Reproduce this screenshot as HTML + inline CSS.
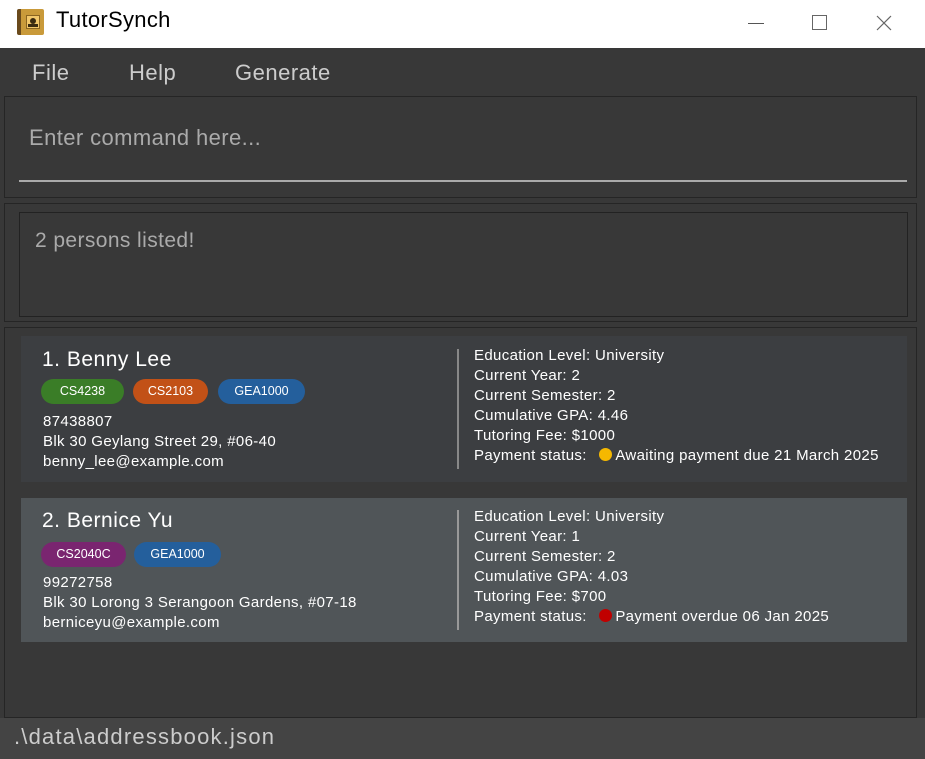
<!DOCTYPE html><html><head><style>
*{margin:0;padding:0;box-sizing:border-box}
body{width:925px;height:759px;overflow:hidden;background:#383838;font-family:"Liberation Sans",sans-serif;position:relative}
.a{position:absolute}
.t{color:#fff;font-size:15px;line-height:20px;white-space:nowrap;letter-spacing:0.35px}
.tag{position:absolute;height:25px;border-radius:13px;color:#fff;font-size:12.5px;line-height:25px;text-align:center}
.dot{display:inline-block;width:13px;height:13px;border-radius:50%;vertical-align:-1px;margin:0 3px 0 8px}
</style></head><body>
<div class="a" style="left:0;top:0;width:925px;height:48px;background:#fff"></div>
<div class="a" style="left:17px;top:9px;width:27px;height:26px;background:#c99a3a;border-left:4px solid #6a4a1c;border-radius:2px"><div class="a" style="left:5px;top:6px;width:14px;height:14px;background:#f2c76a;border:1px solid #8a6420"></div><div class="a" style="left:9px;top:9px;width:6px;height:6px;border-radius:50%;background:#3a2a10"></div><div class="a" style="left:7px;top:15px;width:10px;height:3px;background:#3a2a10"></div></div>
<div class="a" style="left:56px;top:7px;font-size:22px;color:#000;letter-spacing:0.3px">TutorSynch</div>
<div class="a" style="left:748px;top:23px;width:16px;height:1px;background:#555"></div>
<div class="a" style="left:812px;top:15px;width:15px;height:15px;border:1px solid #666"></div>
<svg class="a" style="left:876px;top:15px" width="16" height="16"><path d="M1 1L15 15M15 1L1 15" stroke="#666" stroke-width="1.2"/></svg>
<div class="a" style="left:32px;top:60px;font-size:22px;color:#ccc;letter-spacing:0.5px">File</div>
<div class="a" style="left:129px;top:60px;font-size:22px;color:#ccc;letter-spacing:0.5px">Help</div>
<div class="a" style="left:235px;top:60px;font-size:22px;color:#ccc;letter-spacing:0.5px">Generate</div>
<div class="a" style="left:4px;top:96px;width:913px;height:102px;border:1px solid #252525"></div>
<div class="a" style="left:29px;top:125px;font-size:22px;color:#aaa;letter-spacing:0.4px">Enter command here...</div>
<div class="a" style="left:19px;top:180px;width:888px;height:2px;background:#aaa"></div>
<div class="a" style="left:4px;top:203px;width:913px;height:119px;border:1px solid #252525"></div>
<div class="a" style="left:19px;top:212px;width:889px;height:105px;border:1px solid #222"></div>
<div class="a" style="left:35px;top:229px;font-size:21px;color:#aaa;letter-spacing:0.4px">2 persons listed!</div>
<div class="a" style="left:4px;top:327px;width:913px;height:391px;border:1px solid #252525"></div>
<div class="a" style="left:21px;top:336px;width:886px;height:146px;background:#3c3e41"></div>
<div class="a" style="left:21px;top:498px;width:886px;height:144px;background:#505558"></div>
<div class="a" style="left:457px;top:349px;width:2px;height:120px;background:#888"></div>
<div class="a" style="left:457px;top:510px;width:2px;height:120px;background:#999"></div>
<div class="a t" style="left:42px;top:347px;font-size:21px;line-height:26px;letter-spacing:0.5px">1. Benny Lee</div>
<div class="tag" style="left:41px;top:379px;width:83px;background:#3a7d27">CS4238</div>
<div class="tag" style="left:133px;top:379px;width:75px;background:#c25117">CS2103</div>
<div class="tag" style="left:218px;top:379px;width:87px;background:#245f9c">GEA1000</div>
<div class="a t" style="left:43px;top:412px">87438807<br>Blk 30 Geylang Street 29, #06-40<br>benny_lee@example.com</div>
<div class="a t" style="left:474px;top:346px">Education Level: University<br>Current Year: 2<br>Current Semester: 2<br>Cumulative GPA: 4.46<br>Tutoring Fee: $1000<br>Payment status: <span class="dot" style="background:#f5b800"></span>Awaiting payment due 21 March 2025</div>
<div class="a t" style="left:42px;top:508px;font-size:21px;line-height:26px;letter-spacing:0.5px">2. Bernice Yu</div>
<div class="tag" style="left:41px;top:542px;width:85px;background:#7a2570">CS2040C</div>
<div class="tag" style="left:134px;top:542px;width:87px;background:#245f9c">GEA1000</div>
<div class="a t" style="left:43px;top:573px">99272758<br>Blk 30 Lorong 3 Serangoon Gardens, #07-18<br>berniceyu@example.com</div>
<div class="a t" style="left:474px;top:507px">Education Level: University<br>Current Year: 1<br>Current Semester: 2<br>Cumulative GPA: 4.03<br>Tutoring Fee: $700<br>Payment status: <span class="dot" style="background:#c00000"></span>Payment overdue 06 Jan 2025</div>
<div class="a" style="left:0;top:718px;width:925px;height:41px;background:#444"></div>
<div class="a" style="left:14px;top:724px;font-size:22px;color:#ccc;letter-spacing:1.2px">.\data\addressbook.json</div>
</body></html>
